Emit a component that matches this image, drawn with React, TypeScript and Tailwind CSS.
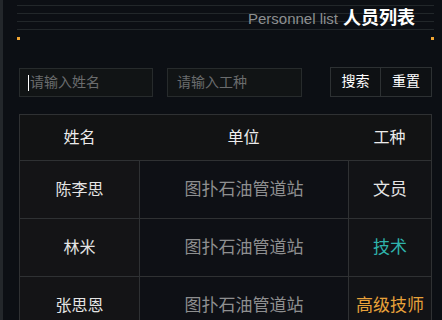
import React from 'react';

const rows = [
  { name: '陈李思', unit: '图扑石油管道站', job: '文员', color: 'text-[#e6e6e6]' },
  { name: '林米', unit: '图扑石油管道站', job: '技术', color: 'text-[#2fb3ac]' },
  { name: '张思恩', unit: '图扑石油管道站', job: '高级技师', color: 'text-[#e8a23a]' },
];

const cjk = "font-['Liberation_Sans','Noto_Sans_CJK_SC',sans-serif]";

export default function App() {
  return (
    <div className={`w-[442px] h-[320px] overflow-hidden bg-[#0c0f14] flex ${cjk}`}>
      {/* left edge strip */}
      <div className="w-[3px] h-full bg-[#23272b] shrink-0" />
      <div className="flex-1 flex flex-col">
        {/* header */}
        <div className="relative mt-[5px] ml-[14px] mr-[8px] h-[25px] flex flex-col gap-[7px]">
          <div className="h-px bg-[#22272a]" />
          <div className="h-px bg-[#22272a]" />
          <div className="h-px bg-[#22272a]" />
          <div className="h-px bg-[#22272a]" />
          <div className="absolute right-[19px] top-[4px] flex items-baseline gap-[5px]">
            <span className="text-[15px] text-[#8d8f91] leading-none">Personnel list</span>
            <span className="text-[18px] font-bold text-white leading-none">人员列表</span>
          </div>
        </div>

        <div className="relative mt-[8px] ml-[14px] mr-[8px] h-px bg-[#555657]">
          <div className="absolute left-0 top-[-1px] w-[3px] h-[3px] bg-[#f2a633]" />
          <div className="absolute right-0 top-[-1px] w-[3px] h-[3px] bg-[#f2a633]" />
        </div>

        {/* search bar */}
        <div className="flex items-center mt-[30px] ml-[16px] mr-[10px]">
          <div className="w-[134px] h-[29px] border border-[#272b2c] bg-[#111415] flex items-center px-[8px]">
            <span className="w-px h-[16px] bg-white mr-px" />
            <span className="text-[14px] text-[#6a6c6d]">请输入姓名</span>
          </div>
          <div className="ml-[14px] w-[135px] h-[29px] border border-[#272b2c] bg-[#111415] flex items-center px-[9px]">
            <span className="text-[14px] text-[#6a6c6d]">请输入工种</span>
          </div>
          <div className="ml-auto flex -mt-[2px]">
            <button className="w-[51px] h-[30px] border border-[#2d3133] bg-[#0e1114] text-white text-[14px]">搜索</button>
            <button className="w-[51px] h-[30px] border border-l-0 border-[#2d3133] bg-[#0e1114] text-white text-[14px]">重置</button>
          </div>
        </div>

        {/* table */}
        <div className="mt-[17px] ml-[16px] w-[413px] border border-[#2f3133]">
          <div className="flex h-[45px] bg-[#121314] text-[16px] text-[#ececec] items-center">
            <div className="w-[119px] text-center">姓名</div>
            <div className="w-[209px] text-center">单位</div>
            <div className="flex-1 text-center">工种</div>
          </div>
          {rows.map((r) => (
            <div key={r.name} className="flex h-[58px] border-t border-[#2f3133]">
              <div className="w-[119px] bg-[#141416] flex items-center justify-center text-[16px] text-[#e4e4e4]">{r.name}</div>
              <div className="w-[209px] border-l border-[#2f3133] bg-[#0e1015] flex items-center justify-center text-[17px] text-[#8e8f90]">{r.unit}</div>
              <div className={`flex-1 border-l border-[#2f3133] bg-[#121316] flex items-center justify-center text-[17px] ${r.color}`}>{r.job}</div>
            </div>
          ))}
        </div>
      </div>
    </div>
  );
}
